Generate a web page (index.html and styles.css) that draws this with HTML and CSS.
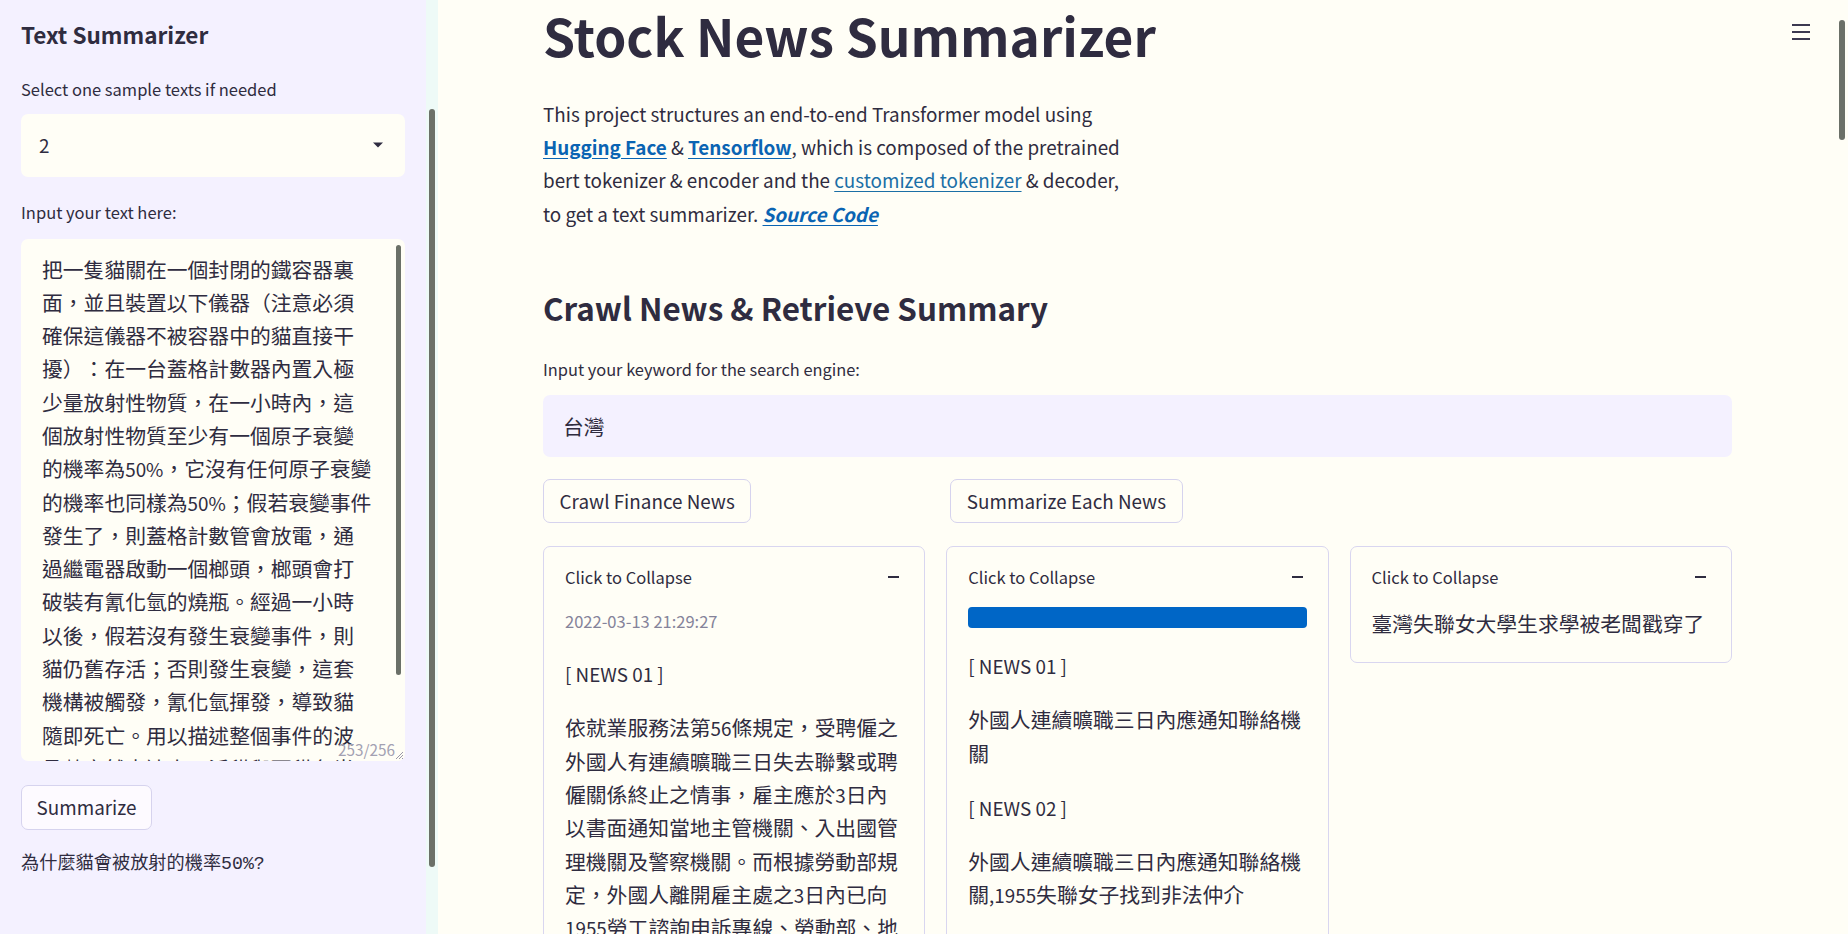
FILE: index.html
```html
<!DOCTYPE html>
<html lang="zh-Hant">
<head>
<meta charset="utf-8">
<title>Stock News Summarizer</title>
<link rel="stylesheet" href="styles.css">
</head>
<body>
<div class="app">
  <aside class="sidebar">
    <h2 class="side-title">Text Summarizer</h2>
    <label class="label label-select">Select one sample texts if needed</label>
    <div class="select">
      <span class="select-value">2</span>
      <svg class="caret" width="10" height="6" viewBox="0 0 10 6"><path d="M0 0.5h10L5 5.5z" fill="#2f2c40"/></svg>
    </div>
    <label class="label label-area">Input your text here:</label>
    <div class="textarea">
      <div class="ta-text">把一隻貓關在一個封閉的鐵容器裏面，並且裝置以下儀器（注意必須確保這儀器不被容器中的貓直接干擾）：在一台蓋格計數器內置入極少量放射性物質，在一小時內，這個放射性物質至少有一個原子衰變的機率為<span class="lat">50%</span>，它沒有任何原子衰變的機率也同樣為<span class="lat">50%</span>；假若衰變事件發生了，則蓋格計數管會放電，通過繼電器啟動一個榔頭，榔頭會打破裝有氰化氫的燒瓶。經過一小時以後，假若沒有發生衰變事件，則貓仍舊存活；否則發生衰變，這套機構被觸發，氰化氫揮發，導致貓隨即死亡。用以描述整個事件的波函數竟然表達出了活貓與死貓各半糾合在一起的狀態。</div>
      <div class="ta-thumb"></div>
      <span class="ta-count">253/256</span>
      <svg class="ta-grip" width="10" height="10" viewBox="0 0 10 10"><path d="M9 2L2 9M9 5L5 9M9 8L8 9" stroke="#9a98a8" stroke-width="1"/></svg>
    </div>
    <button class="btn btn-side">Summarize</button>
    <div class="mono">為什麼貓會被放射的機率50%?</div>
  </aside>
  <div class="side-gutter"><div class="side-thumb"></div></div>
  <main class="main">
    <div class="content">
      <h1 class="title">Stock News Summarizer</h1>
      <div class="intro-cols">
        <p class="intro">This project structures an end-to-end Transformer model using <a class="link strong" href="#">Hugging Face</a> &amp; <a class="link strong" href="#">Tensorflow</a>, which is composed of the pretrained bert tokenizer &amp; encoder and the <a class="link plain" href="#">customized tokenizer</a> &amp; decoder, to get a text summarizer. <a class="link strong italic" href="#">Source Code</a></p>
        <div></div>
      </div>
      <h2 class="section-title">Crawl News &amp; Retrieve Summary</h2>
      <label class="label label-input">Input your keyword for the search engine:</label>
      <div class="text-input">台灣</div>
      <div class="grid3 buttons">
        <div><button class="btn">Crawl Finance News</button></div>
        <div><button class="btn btn-second">Summarize Each News</button></div>
        <div></div>
      </div>
      <div class="grid3 cards">
        <section class="card">
          <div class="card-head"><span>Click to Collapse</span><span class="minus"></span></div>
          <div class="card-body">
            <div class="caption">2022-03-13 21:29:27</div>
            <div class="news-tag">[ NEWS 01 ]</div>
            <p class="news-text">依就業服務法第<span class="lat">56</span>條規定，受聘僱之外國人有連續曠職三日失去聯繫或聘僱關係終止之情事，雇主應於<span class="lat">3</span>日內以書面通知當地主管機關、入出國管理機關及警察機關。而根據勞動部規定，外國人離開雇主處之<span class="lat">3</span>日內已向<span class="lat">1955</span>勞工諮詢申訴專線、勞動部、地方主管機關提出申訴者，不視為連續曠職。</p>
          </div>
        </section>
        <section class="card">
          <div class="card-head"><span>Click to Collapse</span><span class="minus"></span></div>
          <div class="card-body">
            <div class="progress"></div>
            <div class="news-tag">[ NEWS 01 ]</div>
            <p class="news-text">外國人連續曠職三日內應通知聯絡機關</p>
            <div class="news-tag">[ NEWS 02 ]</div>
            <p class="news-text">外國人連續曠職三日內應通知聯絡機關<span class="lat">,1955</span>失聯女子找到非法仲介</p>
            <div class="news-tag">[ NEWS 03 ]</div>
            <p class="news-text">臺灣失聯女大學生求學被老闆戳穿了</p>
          </div>
        </section>
        <section class="card card-short">
          <div class="card-head"><span>Click to Collapse</span><span class="minus"></span></div>
          <div class="card-body">
            <p class="news-text">臺灣失聯女大學生求學被老闆戳穿了</p>
          </div>
        </section>
      </div>
    </div>
    <div class="main-gutter"><div class="main-thumb"></div></div>
    <div class="menu" aria-label="menu"><span></span><span></span><span></span></div>
  </main>
</div>
</body>
</html>
```

FILE: styles.css
```css
* { box-sizing: border-box; }
html, body {
  margin: 0;
  height: 100%;
  overflow: hidden;
}
body {
  font-family: "Noto Sans CJK TC", "Noto Sans", sans-serif;
  color: #2f2c40;
  background: #fffef6;
  text-spacing-trim: space-all;
  font-size: 20.8px;
  line-height: 33.3px;
}
/* Latin glyphs of the CJK face run ~10% wider than the reference face */
.lat { font-size: 0.906em; }
.app {
  display: flex;
  height: 934px;
  overflow: hidden;
}

/* ---------- sidebar ---------- */
.sidebar {
  width: 426px;
  flex: none;
  background: #f4f1ff;
  padding: 18px 21px 0 21px;
}
.side-title {
  margin: 0 0 25px;
  font-size: 22.5px;
  line-height: 32px;
  font-weight: 600;
}
.label {
  display: block;
  font-size: 16.5px;
  line-height: 29px;
}
.label-select { margin-bottom: 9.5px; }
.label-area { margin: 21.5px 0 11.5px; }
.select {
  height: 63px;
  background: #fffef6;
  border-radius: 7px;
  display: flex;
  align-items: center;
  justify-content: space-between;
  padding: 0 22px 0 18px;
}
.select-value { font-size: 18.85px; }
.caret { display: block; }
.textarea {
  position: relative;
  height: 522px;
  background: #fffef6;
  border-radius: 7px;
  overflow: hidden;
}
.ta-text {
  width: 353px;
  padding: 14px 0 0 21px;
  font-size: 20.8px;
  line-height: 33.3px;
}
.ta-thumb {
  position: absolute;
  left: 374.5px;
  top: 6px;
  width: 5.5px;
  height: 430px;
  border-radius: 3px;
  background: #6b7068;
}
.ta-count {
  position: absolute;
  right: 10px;
  bottom: 1px;
  font-size: 15.3px;
  line-height: 22px;
  color: #a3a1b2;
}
.ta-grip {
  position: absolute;
  right: 1px;
  bottom: 1px;
}
.btn {
  font-family: inherit;
  font-size: 18.85px;
  line-height: 28px;
  color: #2f2c40;
  background: #fffef6;
  border: 1px solid #d6d3ee;
  border-radius: 7px;
  height: 44px;
  padding: 0 15.6px;
  cursor: pointer;
}
.btn-side {
  display: block;
  margin-top: 24px;
  height: 45px;
  width: 131px;
  padding: 0;
  background: #fdfaff;
}
.mono {
  margin-top: 20.5px;
  font-family: "Liberation Mono", "Noto Sans CJK TC", monospace;
  font-size: 18.2px;
  line-height: 29px;
}
.side-gutter {
  width: 12px;
  flex: none;
  background: #eefaf7;
  padding: 109px 0 0 3px;
}
.side-thumb {
  width: 6px;
  height: 758px;
  border-radius: 3px;
  background: #6b7068;
}

/* ---------- main ---------- */
.main {
  position: relative;
  flex: 1;
  display: flex;
  background: #fffef6;
}
.content {
  flex: 1;
  min-width: 0;
  padding: 1px 106px 0 105px;
}
.title {
  margin: 0;
  font-size: 51.4px;
  line-height: 68px;
  font-weight: 700;
}
.intro-cols {
  display: grid;
  grid-template-columns: 1fr 1fr;
  column-gap: 20.8px;
  margin-top: 27.8px;
}
.intro {
  margin: 0;
  font-size: 18.85px;
  line-height: 33.3px;
}
.link { text-decoration: underline; text-underline-offset: 3px; }
.link.strong { color: #0a64b3; font-weight: 700; }
.link.plain { color: #1b6fa6; }
.link.italic { font-style: italic; }
.section-title {
  margin: 56px 0 0;
  font-size: 31.4px;
  line-height: 44px;
  font-weight: 600;
}
.label-input { margin: 25px 0 11.5px; font-size: 16.4px; }
.text-input {
  height: 62px;
  background: #f4f1ff;
  border-radius: 7px;
  padding: 0 20px;
  display: flex;
  align-items: center;
  font-size: 20.8px;
}
.grid3 {
  display: grid;
  grid-template-columns: repeat(3, 1fr);
  column-gap: 20.8px;
}
.buttons { margin-top: 22px; }
.btn-second { margin-left: 4px; }
.cards {
  margin-top: 23px;
  align-items: start;
}
.card {
  border: 1px solid #d9d6f0;
  border-radius: 7px;
  height: 400px;
  overflow: hidden;
}
.card.card-short { height: auto; }
.card-head {
  height: 60px;
  display: flex;
  align-items: center;
  justify-content: space-between;
  padding: 0 25px 0 21px;
  font-size: 16.5px;
}
.minus {
  width: 11px;
  height: 2px;
  background: #2f2c40;
}
.card-body {
  padding: 0 21px 20.8px;
  display: flex;
  flex-direction: column;
  gap: 20.8px;
}
.caption {
  font-size: 16.5px;
  line-height: 29px;
  color: #85839a;
}
.news-tag { font-size: 18.85px; line-height: 33.3px; }
.news-text {
  margin: 0;
  line-height: 33.3px;
}
.progress {
  flex: none;
  height: 21px;
  background: #0066c6;
  border-radius: 4px;
}
.main-gutter {
  width: 10px;
  flex: none;
  padding: 20px 0 0 1px;
}
.main-thumb {
  width: 6px;
  height: 120px;
  border-radius: 3px;
  background: #6b7068;
}
.menu {
  position: absolute;
  top: 24px;
  right: 38px;
  width: 18px;
  display: flex;
  flex-direction: column;
  gap: 5px;
}
.menu span {
  display: block;
  height: 2px;
  background: #3c3950;
}
```
